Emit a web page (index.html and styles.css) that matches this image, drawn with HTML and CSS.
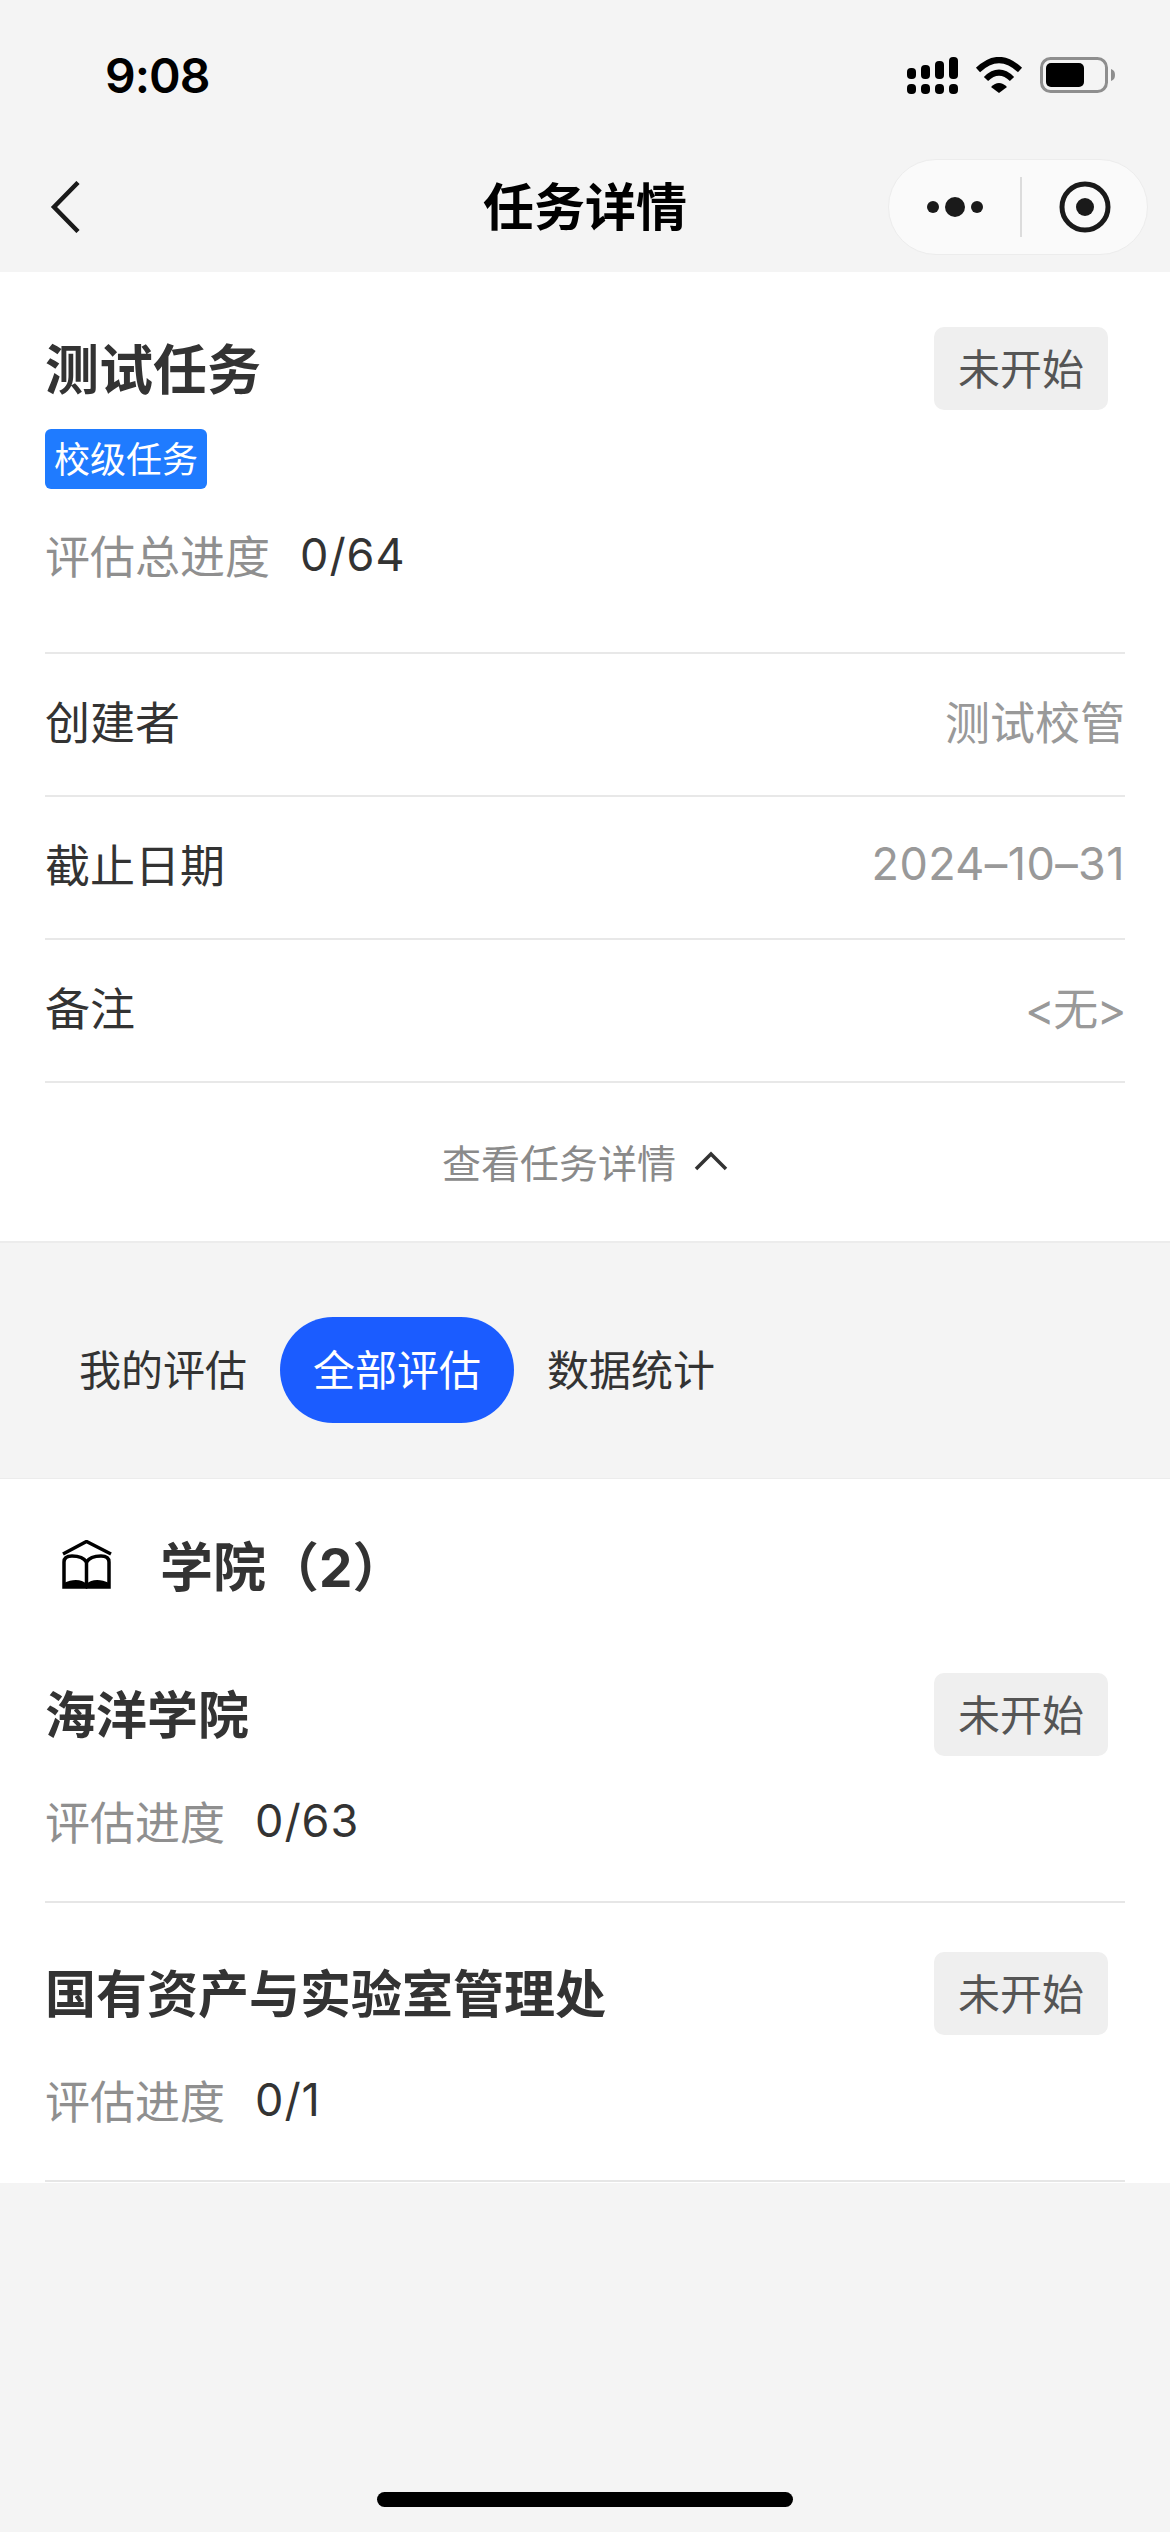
FILE: index.html
```html
<!DOCTYPE html>
<html lang="zh-CN">

<head>
    <meta charset="UTF-8">
    <meta name="viewport" content="width=device-width, initial-scale=1.0">
    <title>任务详情</title>
    <link rel="stylesheet" href="styles.css">
</head>

<body>

    <div class="status-bar">
        <span class="time">9:08</span>
        <div class="status-icons">
            <svg width="51" height="37" viewBox="0 0 51 37" fill="#000">
                <rect x="0" y="11" width="9" height="11" rx="4"/>
                <rect x="14" y="8" width="9" height="14" rx="4"/>
                <rect x="28" y="4" width="9" height="18" rx="4"/>
                <rect x="42" y="0" width="9" height="22" rx="4"/>
                <rect x="0" y="27" width="9" height="10" rx="4"/>
                <rect x="14" y="27" width="9" height="10" rx="4"/>
                <rect x="28" y="27" width="9" height="10" rx="4"/>
                <rect x="42" y="27" width="9" height="10" rx="4"/>
            </svg>
            <svg width="48" height="36" viewBox="0 0 48 36" fill="none" stroke="#000" stroke-width="6">
                <path d="M3 13 Q24 -7 45 13"/>
                <path d="M11 22 Q24 9 37 22"/>
                <path d="M16 30 Q24 22 32 30 L24 36 Z" fill="#000" stroke="none"/>
            </svg>
            <svg width="75" height="36" viewBox="0 0 75 36">
                <rect x="1.5" y="1.5" width="65" height="33" rx="9" fill="none" stroke="#8e8e8e" stroke-width="3"/>
                <rect x="6" y="6" width="38" height="24" rx="5" fill="#000"/>
                <path d="M71 12 C74 13 75 15 75 18 C75 21 74 23 71 24 Z" fill="#8e8e8e"/>
            </svg>
        </div>
    </div>

    <nav class="nav-bar">
        <svg class="back-icon" width="30" height="52" viewBox="0 0 30 52" fill="none" stroke="#1a1a1a" stroke-width="4.5">
            <path d="M28 1.5 L4 26 L28 50.5"/>
        </svg>
        <h1 class="nav-title">任务详情</h1>
        <div class="capsule">
            <svg width="58" height="22" viewBox="0 0 58 22" fill="#1a1a1a">
                <circle cx="7" cy="11" r="6"/>
                <circle cx="29" cy="11" r="10"/>
                <circle cx="51" cy="11" r="6"/>
            </svg>
            <span class="capsule-line"></span>
            <svg width="54" height="54" viewBox="0 0 54 54">
                <circle cx="27" cy="27" r="23" fill="none" stroke="#1a1a1a" stroke-width="5"/>
                <circle cx="27" cy="27" r="9" fill="#1a1a1a"/>
            </svg>
        </div>
    </nav>

    <section class="task-card">
        <div class="head-row">
            <h2 class="task-title">测试任务</h2>
            <span class="state-tag">未开始</span>
        </div>
        <span class="level-tag">校级任务</span>
        <div class="progress-row task-progress">
            <span class="progress-label">评估总进度</span>
            <span class="progress-value">0/64</span>
        </div>
        <div class="info-row">
            <span>创建者</span>
            <span class="info-value">测试校管</span>
        </div>
        <div class="info-row">
            <span>截止日期</span>
            <span class="info-value date-value">2024–10–31</span>
        </div>
        <div class="info-row">
            <span>备注</span>
            <span class="info-value empty-value">&lt;无&gt;</span>
        </div>
        <div class="toggle-row">
            <span>查看任务详情</span>
            <svg width="34" height="22" viewBox="0 0 34 22" fill="none" stroke="#333" stroke-width="3.5">
                <path d="M2 19 L17 4 L32 19"/>
            </svg>
        </div>
    </section>

    <div class="tabs">
        <span class="tab">我的评估</span>
        <span class="tab active">全部评估</span>
        <span class="tab">数据统计</span>
    </div>

    <section class="college-list">
        <div class="list-head">
            <svg width="50" height="50" viewBox="0 0 50 50" fill="none" stroke="#000" stroke-width="3.5">
                <path d="M1 14 L24.5 1.5 L49 14"/>
                <path d="M2 47 L2 22 C2 17 6 16 10 16 C16 16 22 18 24.5 22 C27 18 33 16 39 16 C43 16 47 17 47 22 L47 47 Z"/>
                <path d="M24.5 22 V47"/>
                <path d="M2 47 V43 C10 39 20 39 24.5 44 C29 39 39 39 47 43 V47 H27 L24.5 49 L22 47 Z" fill="#000" stroke="none"/>
            </svg>
            <h2 class="list-title">学院（2）</h2>
        </div>

        <article class="college-item">
            <div class="head-row">
                <h3 class="college-name">海洋学院</h3>
                <span class="state-tag">未开始</span>
            </div>
            <div class="progress-row">
                <span class="progress-label">评估进度</span>
                <span class="progress-value">0/63</span>
            </div>
        </article>

        <article class="college-item">
            <div class="head-row">
                <h3 class="college-name">国有资产与实验室管理处</h3>
                <span class="state-tag">未开始</span>
            </div>
            <div class="progress-row">
                <span class="progress-label">评估进度</span>
                <span class="progress-value">0/1</span>
            </div>
        </article>
    </section>

    <div class="home-bar"></div>

</body>

</html>
```

FILE: styles.css
```css
* {
    box-sizing: border-box;
}

html,
body {
    margin: 0;
    padding: 0;
}

body {
    display: flex;
    flex-direction: column;
    height: 2532px;
    overflow: hidden;
    background-color: #f4f4f4;
    font-family: "Inter", "Noto Sans CJK SC", sans-serif;
    font-size: 45px;
    color: #333;
}

h1,
h2,
h3 {
    margin: 0;
}

.status-bar {
    display: flex;
    justify-content: space-between;
    align-items: center;
    height: 150px;
    padding: 0 55px 0 105px;
}

.time {
    font-size: 48px;
    font-weight: 600;
    letter-spacing: -1px;
    color: #000;
}

.status-icons {
    display: flex;
    align-items: center;
    gap: 17px;
}

.nav-bar {
    display: grid;
    grid-template-columns: 1fr auto 1fr;
    align-items: center;
    height: 122px;
    padding: 0 22px 9px;
}

.back-icon {
    margin-left: 28px;
}

.nav-title {
    margin-bottom: 5px;
    font-size: 51px;
    font-weight: 700;
    color: #000;
}

.capsule {
    display: flex;
    align-items: center;
    gap: 36px;
    justify-self: end;
    width: 260px;
    height: 96px;
    padding-left: 37px;
    background-color: #fafafa;
    border: 1px solid #ececec;
    border-radius: 48px;
}

.capsule-line {
    width: 2px;
    height: 60px;
    background-color: #dcdcdc;
}

.task-card {
    padding: 55px 45px 0;
    background-color: #fff;
    border-bottom: 2px solid #ececec;
}

.head-row {
    display: flex;
    justify-content: space-between;
    align-items: center;
    height: 83px;
}

.task-title {
    margin-bottom: 4px;
    font-size: 54px;
    font-weight: 700;
}

.state-tag {
    display: flex;
    justify-content: center;
    align-items: center;
    width: 174px;
    height: 83px;
    margin-right: 17px;
    padding-bottom: 5px;
    background-color: #efefef;
    border-radius: 10px;
    font-size: 42px;
    color: #555;
}

.level-tag {
    display: flex;
    justify-content: center;
    align-items: center;
    width: 162px;
    height: 60px;
    margin-top: 19px;
    padding-bottom: 5px;
    background-color: #1f7bff;
    border-radius: 6px;
    font-size: 36px;
    color: #fff;
}

.progress-row {
    display: flex;
    align-items: center;
    gap: 30px;
    height: 60px;
    margin-top: 36px;
    padding-bottom: 3px;
}

.task-progress {
    margin-top: 38px;
    margin-bottom: 65px;
    padding-bottom: 5px;
}

.progress-label {
    color: #8f8f8f;
}

.progress-value {
    letter-spacing: 1px;
}

.info-row {
    display: flex;
    justify-content: space-between;
    align-items: center;
    height: 143px;
    padding-bottom: 8px;
    border-top: 2px solid #e8e8e8;
}

.info-value {
    color: #999;
}

.date-value {
    letter-spacing: 0.4px;
}

.empty-value {
    letter-spacing: -1.5px;
}

.toggle-row {
    display: flex;
    justify-content: center;
    align-items: center;
    gap: 18px;
    height: 160px;
    padding-bottom: 2px;
    border-top: 2px solid #e8e8e8;
    font-size: 39px;
    color: #8a8a8a;
}

.tabs {
    display: flex;
    height: 236px;
    padding: 74px 0 0 46px;
    border-bottom: 1px solid #ececec;
}

.tab {
    display: flex;
    align-items: center;
    height: 106px;
    padding: 0 33px 6px;
    border-radius: 53px;
    font-size: 42px;
}

.tab.active {
    background-color: #1b5cff;
    color: #fff;
}

.college-list {
    height: 704px;
    padding: 0 45px;
    background-color: #fff;
}

.list-head {
    display: flex;
    align-items: center;
    gap: 48px;
    height: 145px;
    padding: 27px 0 0 17px;
}

.list-title {
    margin-bottom: 3px;
    font-size: 53px;
    font-weight: 700;
}

.college-item {
    padding: 49px 0;
    border-bottom: 2px solid #e6e6e6;
}

.college-name {
    margin-bottom: 5px;
    font-size: 51px;
    font-weight: 700;
}

.home-bar {
    width: 416px;
    height: 15px;
    margin: auto auto 25px;
    background-color: #000;
    border-radius: 8px;
}
```
